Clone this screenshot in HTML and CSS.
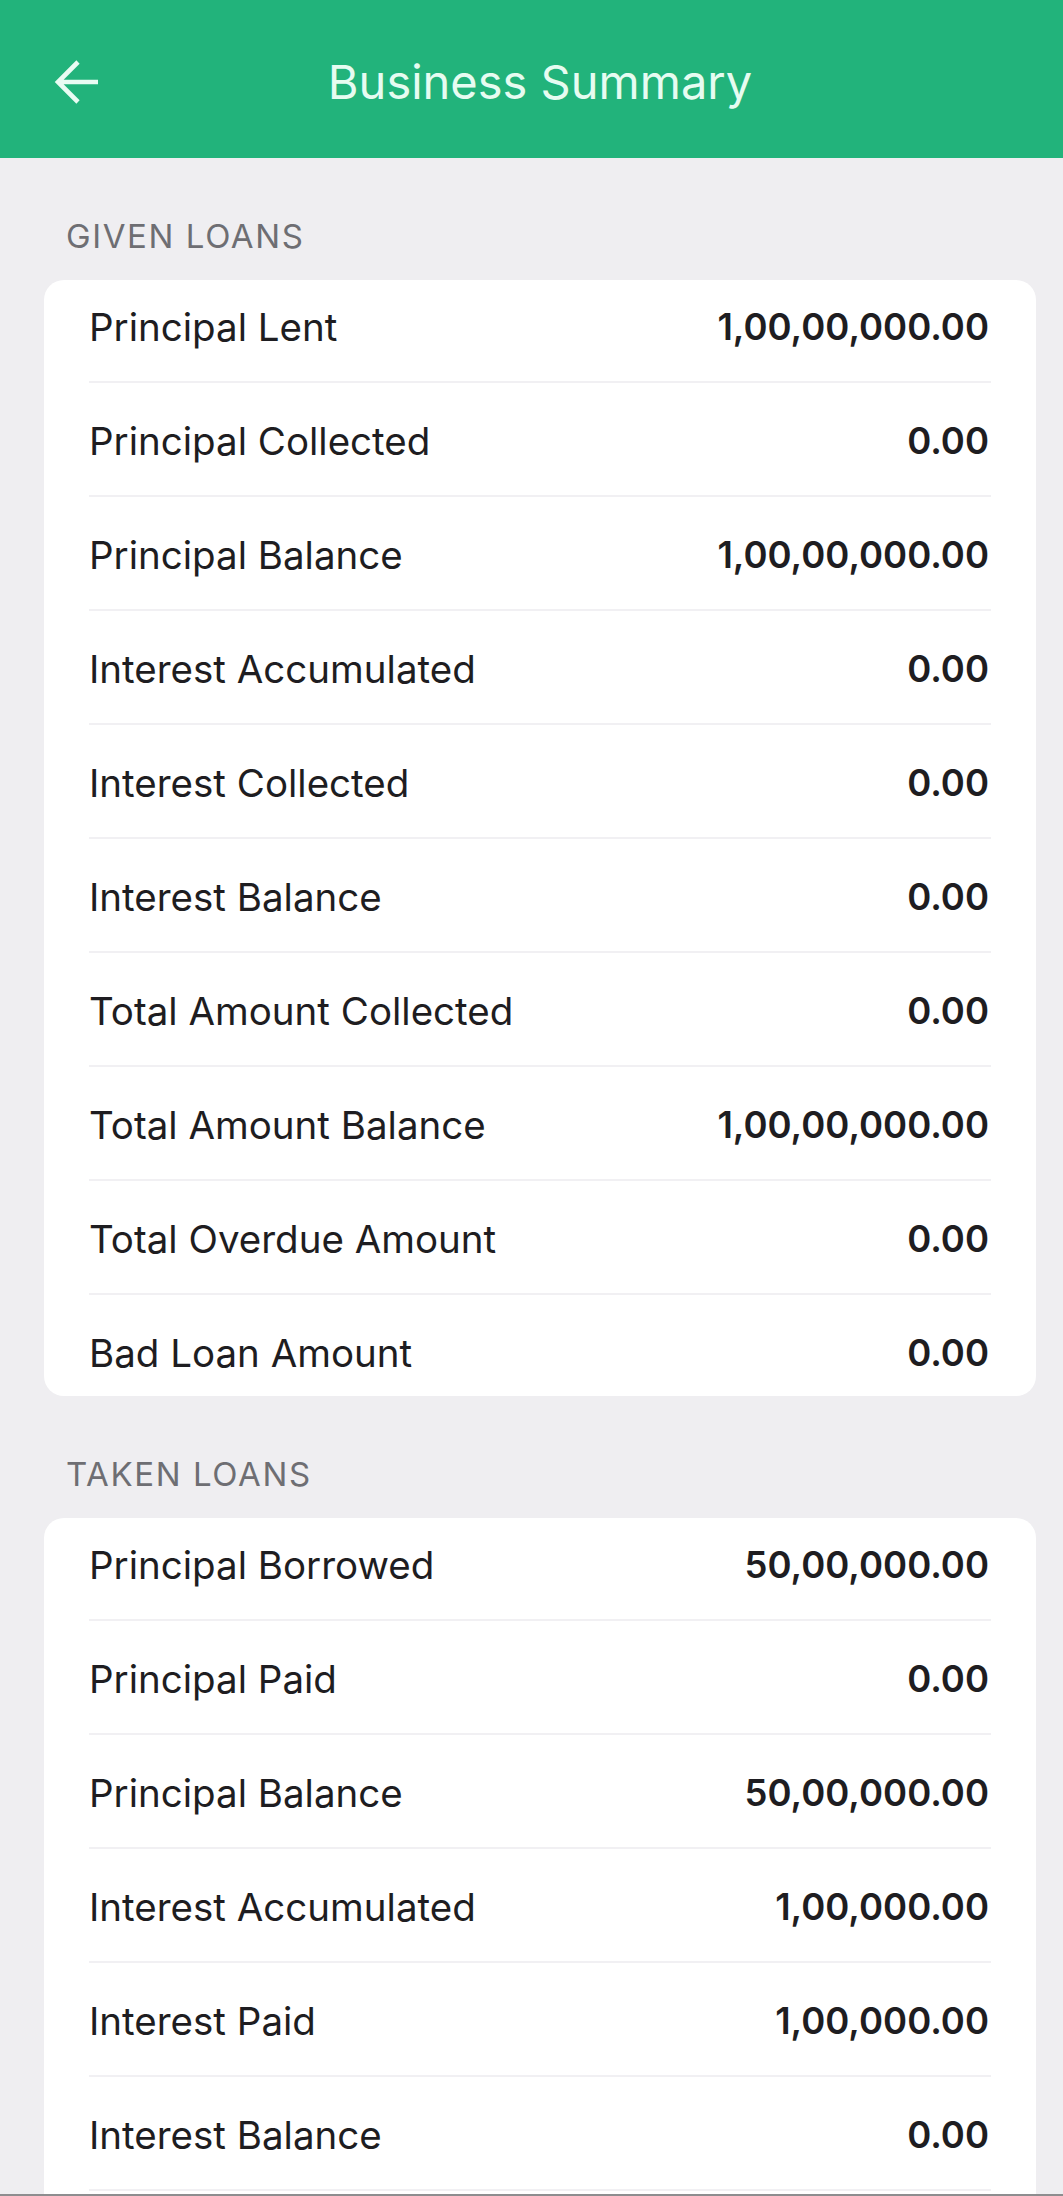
FILE: index.html
```html
<!DOCTYPE html>
<html lang="en">
<head>
<meta charset="utf-8">
<title>Business Summary</title>
<link rel="stylesheet" href="styles.css">
</head>
<body>
<div class="screen">
  <header class="appbar">
    <button class="back" aria-label="Back">
      <svg class="back-icon" viewBox="0 0 46 46" width="46" height="46">
        <path d="M45 23 H5 M25 3 L5 23 L25 43" fill="none" stroke="currentColor" stroke-width="4.6" stroke-linejoin="miter"/>
      </svg>
    </button>
    <h1 class="title">Business Summary</h1>
    <span class="spacer"></span>
  </header>

  <main class="content">
    <section class="section">
      <h2 class="section-label">GIVEN LOANS</h2>
      <div class="card">
        <div class="row"><span class="label">Principal Lent</span><span class="value">1,00,00,000.00</span></div>
        <div class="row"><span class="label">Principal Collected</span><span class="value">0.00</span></div>
        <div class="row"><span class="label">Principal Balance</span><span class="value">1,00,00,000.00</span></div>
        <div class="row"><span class="label">Interest Accumulated</span><span class="value">0.00</span></div>
        <div class="row"><span class="label">Interest Collected</span><span class="value">0.00</span></div>
        <div class="row"><span class="label">Interest Balance</span><span class="value">0.00</span></div>
        <div class="row"><span class="label">Total Amount Collected</span><span class="value">0.00</span></div>
        <div class="row"><span class="label">Total Amount Balance</span><span class="value">1,00,00,000.00</span></div>
        <div class="row"><span class="label">Total Overdue Amount</span><span class="value">0.00</span></div>
        <div class="row"><span class="label">Bad Loan Amount</span><span class="value">0.00</span></div>
      </div>
    </section>

    <section class="section">
      <h2 class="section-label">TAKEN LOANS</h2>
      <div class="card card-open">
        <div class="row"><span class="label">Principal Borrowed</span><span class="value">50,00,000.00</span></div>
        <div class="row"><span class="label">Principal Paid</span><span class="value">0.00</span></div>
        <div class="row"><span class="label">Principal Balance</span><span class="value">50,00,000.00</span></div>
        <div class="row"><span class="label">Interest Accumulated</span><span class="value">1,00,000.00</span></div>
        <div class="row"><span class="label">Interest Paid</span><span class="value">1,00,000.00</span></div>
        <div class="row"><span class="label">Interest Balance</span><span class="value">0.00</span></div>
      </div>
    </section>
  </main>

  <div class="nav-edge"></div>
</div>
</body>
</html>
```
FILE: styles.css
```css
* {
  box-sizing: border-box;
}

html, body {
  margin: 0;
  padding: 0;
}

body {
  font-family: Inter, "Noto Sans", "Liberation Sans", sans-serif;
  background: #efeef1;
}

.screen {
  height: 100vh;
  display: flex;
  flex-direction: column;
  overflow: hidden;
  background: #efeef1;
}

.appbar {
  flex: 0 0 158px;
  background: #22b37b;
  display: grid;
  grid-template-columns: 1fr auto 1fr;
  align-items: center;
  padding: 6px 27px 0 44px;
  color: #e9fcf3;
}

.back {
  justify-self: start;
  margin-left: 9px;
  padding: 0;
  border: 0;
  background: none;
  color: #e9fcf3;
  display: flex;
  align-items: center;
}

.back-icon {
  display: block;
}

.title {
  margin: 0;
  font-size: 47px;
  font-weight: 400;
  line-height: 56px;
  color: #e6fcf1;
}

.content {
  flex: 1 1 auto;
  min-height: 0;
  overflow: hidden;
}

.section {
  padding-top: 58px;
}

.section-label {
  margin: 0 0 24px 66px;
  font-size: 33px;
  line-height: 40px;
  font-weight: 400;
  color: #6e6e73;
  letter-spacing: 1.6px;
}

.card {
  margin: 0 27px 0 44px;
  background: #ffffff;
  border-radius: 20px;
  padding: 0 45px 0 45px;
}

.card-open {
  padding-bottom: 60px;
}

.row {
  display: flex;
  justify-content: space-between;
  align-items: center;
  padding: 36px 0 32px;
  line-height: 44px;
  border-bottom: 2px solid #f1f0f3;
}

.row:first-child {
  padding-top: 25px;
}

.card:not(.card-open) .row:last-child {
  padding-bottom: 21px;
  border-bottom: 0;
}

.label {
  font-size: 38.5px;
  font-weight: 400;
  color: #1e1d21;
}

.value {
  font-size: 36.5px;
  font-weight: 600;
  color: #1e1d21;
  padding-right: 2px;
}

.nav-edge {
  flex: 0 0 2px;
  background: #8d8d8f;
}
```
